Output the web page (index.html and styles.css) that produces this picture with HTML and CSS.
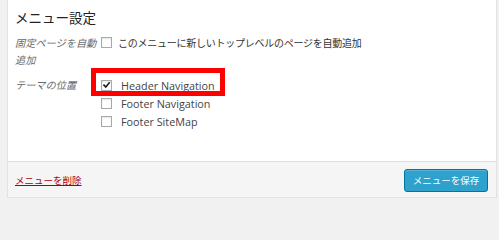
FILE: index.html
```html
<!DOCTYPE html>
<html lang="ja">
<head>
<meta charset="utf-8">
<title>メニュー設定</title>
<link rel="stylesheet" href="styles.css">
</head>
<body>
<div class="panel">
  <div class="panel-body">
    <h3 class="title">メニュー設定</h3>
    <div class="form">
      <div class="label">固定ページを自動追加</div>
      <div class="field">
        <label class="check"><span class="box"></span><span class="jp">このメニューに新しいトップレベルのページを自動追加</span></label>
      </div>
      <div class="label label-2">テーマの位置</div>
      <div class="field locations">
        <label class="check item"><span class="box checked"><svg viewBox="0 0 10 10" width="10" height="10"><path d="M2.2 5.2 L4.2 7.3 L8 2.6" fill="none" stroke="#1e1e1e" stroke-width="1.8" stroke-linecap="square"/></svg></span><span class="en">Header Navigation</span></label>
        <label class="check item"><span class="box"></span><span class="en">Footer Navigation</span></label>
        <label class="check item"><span class="box"></span><span class="en">Footer SiteMap</span></label>
        <div class="highlight"></div>
      </div>
    </div>
  </div>
  <div class="panel-footer">
    <a class="delete" href="#">メニューを削除</a>
    <button class="save" type="button">メニューを保存</button>
  </div>
</div>
</body>
</html>
```

FILE: styles.css
```css
html, body {
  margin: 0;
  padding: 0;
}
body {
  background: #f1f1f1;
  font-family: "Open Sans", "Noto Sans CJK JP", sans-serif;
  color: #444;
  height: 210px;
  overflow: hidden;
}
.panel {
  margin-left: 7px;
  width: 488px;
  background: #fff;
  border-left: 1px solid #e2e2e2;
  border-right: 1px solid #e2e2e2;
  border-bottom: 1px solid #e2e2e2;
}
.panel-body {
  height: 161px;
  padding: 7px 0 0 7px;
  box-sizing: border-box;
}
.title {
  margin: 0;
  font-family: "Noto Sans CJK JP", sans-serif;
  font-weight: normal;
  font-size: 13.5px;
  line-height: 20px;
  color: #222;
}
.form {
  margin-top: 6.5px;
  display: grid;
  grid-template-columns: 86px 1fr;
  row-gap: 8px;
}
.label {
  font-family: "Noto Sans CJK JP", sans-serif;
  font-style: italic;
  font-size: 10.2px;
  line-height: 17px;
  color: #6a6a6a;
  width: 84px;
}
.field {
  font-size: 10px;
}
.check {
  display: flex;
  align-items: center;
  height: 17px;
}
.box {
  width: 11px;
  height: 11px;
  border: 1px solid #a7aaad;
  background: #fff;
  box-shadow: inset 0 1px 2px rgba(0,0,0,0.1);
  box-sizing: border-box;
  margin-right: 6px;
  display: flex;
  align-items: center;
  justify-content: center;
  flex: none;
}
.box svg {
  display: block;
}
.jp {
  font-family: "Noto Sans CJK JP", sans-serif;
  font-size: 10px;
  letter-spacing: -0.25px;
  color: #333;
}
.locations {
  position: relative;
  padding-top: 0.5px;
}
.item {
  height: 18px;
}
.item .box {
  margin-right: 9px;
}
.en {
  font-family: "Open Sans", sans-serif;
  font-size: 10.8px;
  color: #444;
}
.highlight {
  position: absolute;
  left: -10px;
  top: -8px;
  width: 134px;
  height: 28px;
  border: 5px solid #ff0000;
  box-sizing: border-box;
  pointer-events: none;
}
.panel-footer {
  height: 36px;
  box-sizing: border-box;
  background: #f5f5f5;
  border-top: 1px solid #dfdfdf;
  display: flex;
  align-items: center;
  justify-content: space-between;
  padding: 0 8px 0 7px;
}
.delete {
  font-family: "Noto Sans CJK JP", sans-serif;
  font-size: 9.5px;
  color: #a00;
  text-decoration: underline;
}
.save {
  width: 84px;
  height: 23px;
  background: #2ea2cc;
  border: 1px solid #0074a2;
  border-radius: 3px;
  box-shadow: inset 0 1px 0 rgba(120,200,230,0.5);
  color: #fff;
  font-family: "Noto Sans CJK JP", sans-serif;
  font-size: 9.5px;
  padding: 0;
  margin-top: 1px;
}
```
